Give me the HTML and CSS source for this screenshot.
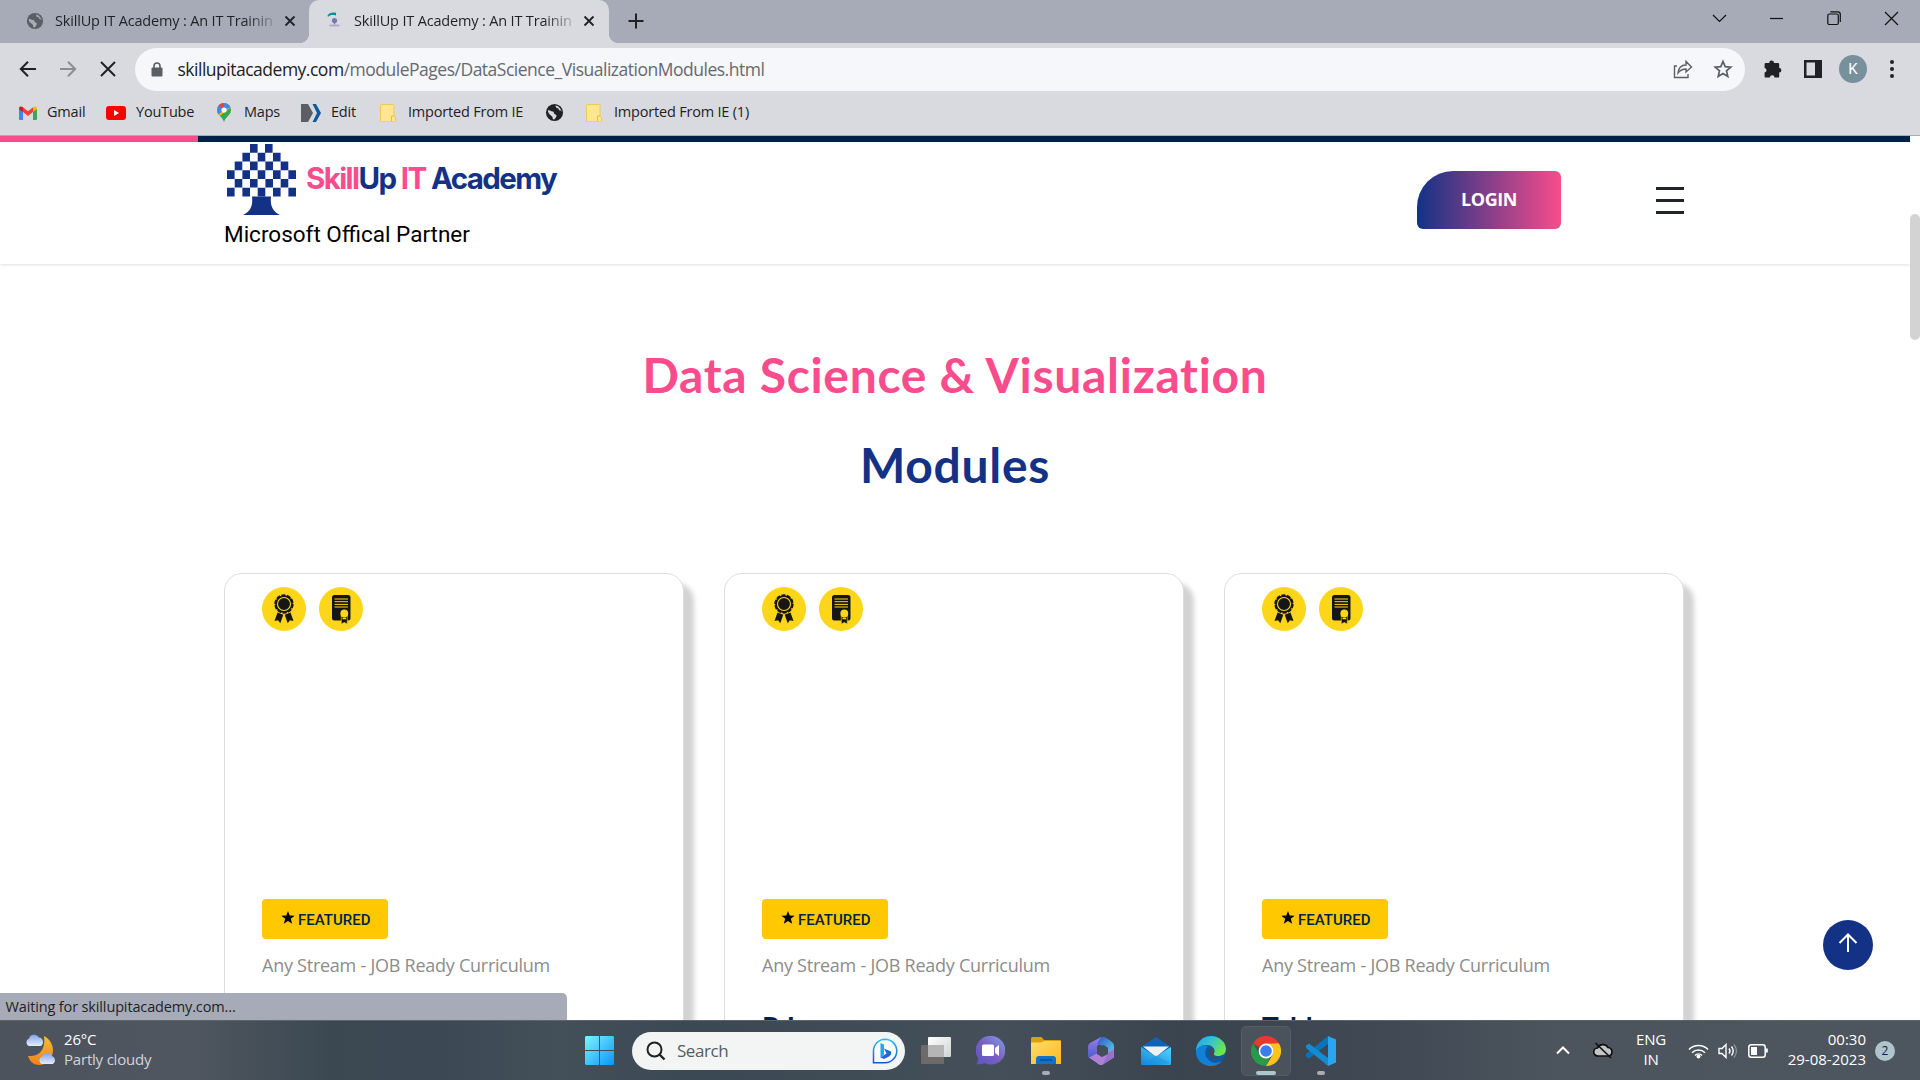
FILE: index.html
```html
<!DOCTYPE html>
<html lang="en">
<head>
<meta charset="utf-8">
<title>SkillUp IT Academy : An IT Training</title>
<link rel="stylesheet" href="styles.css">
</head>
<body>
<svg class="defs" width="0" height="0">
  <defs>
    <linearGradient id="win" x1="0" y1="0" x2="1" y2="1"><stop offset="0" stop-color="#7df4fd"/><stop offset="1" stop-color="#0a95fb"/></linearGradient>
    <linearGradient id="bing" x1="0" y1="0" x2="0" y2="1"><stop offset="0" stop-color="#22bfee"/><stop offset="1" stop-color="#1c54c4"/></linearGradient>
    <linearGradient id="chat" x1="0" y1="1" x2="1" y2="0"><stop offset="0" stop-color="#5a55c8"/><stop offset=".5" stop-color="#7b5fc0"/><stop offset="1" stop-color="#7fa0ea"/></linearGradient>
    <linearGradient id="fold" x1="0" y1="0" x2="1" y2="1"><stop offset="0" stop-color="#ffdd6a"/><stop offset="1" stop-color="#fdb81f"/></linearGradient>
    <linearGradient id="mail" x1="0" y1="1" x2="1" y2="0"><stop offset="0" stop-color="#1484dc"/><stop offset="1" stop-color="#4fd8f8"/></linearGradient>
    <linearGradient id="edge1" x1="0" y1="0" x2="1" y2=".5"><stop offset="0" stop-color="#1f9fe8"/><stop offset=".5" stop-color="#35c3cf"/><stop offset="1" stop-color="#6ce648"/></linearGradient>
    <linearGradient id="moon" x1="0" y1="0" x2="0" y2="1"><stop offset="0" stop-color="#f3be36"/><stop offset="1" stop-color="#f0801c"/></linearGradient>
    <linearGradient id="cloud" x1="0" y1="0" x2="0" y2="1"><stop offset="0" stop-color="#83a3ea"/><stop offset="1" stop-color="#e6edfb"/></linearGradient>
    <linearGradient id="m1" x1="0" y1="0" x2="0" y2="1"><stop offset="0" stop-color="#a07de8"/><stop offset="1" stop-color="#3f5ac8"/></linearGradient>
    <linearGradient id="m2" x1="0" y1="0" x2="1" y2="1"><stop offset="0" stop-color="#2a55c0"/><stop offset="1" stop-color="#5fd8fb"/></linearGradient>
    <linearGradient id="tv" x1="0" y1="0" x2="1" y2="1"><stop offset="0" stop-color="#ffffff"/><stop offset="1" stop-color="#d2d2d2"/></linearGradient>
    <symbol id="globe" viewBox="0 0 20 20"><circle cx="10" cy="10" r="9" fill="currentColor"/><path d="M3 8c2-1 3 1 5 1s1 3 3 3 1 3-1 5c-1 .8-2 0-2-1.500S6 13 5 12 3 10 3 8zM10 3c2 0 1 2.500 3 2.500S14 8 16 8s1.500-.5 1.500 1.500C17 7 15 4 12.500 3z" fill="var(--hole)"/></symbol>
    <symbol id="note" viewBox="0 0 16 18"><path d="M1 .5h12a1 1 0 0 1 1 1V12l1.500 1.500V17a.8.8 0 0 1-.8.8H1.500A1 1 0 0 1 .5 17V1.200z" fill="#ffe68f" stroke="#edca55"/><path d="M14 12h-2.500v5" fill="none" stroke="#e3bb3e"/></symbol>
    <symbol id="x" viewBox="0 0 12 12"><path d="M1.500 1.500l9 9M10.500 1.500l-9 9" stroke="currentColor" stroke-width="1.800" fill="none"/></symbol>
    <symbol id="medal" viewBox="0 0 44 44"><circle cx="22" cy="22" r="22" fill="#fdd619"/><path d="M15.500 25.500L12.500 34l3.600-.8 2.200 3 3-8.500zM28.500 25.500l3 8.500-3.600-.8-2.200 3-3-8.500z" fill="#161616"/><circle cx="22" cy="17" r="8.800" fill="#161616" stroke="#161616" stroke-width="1.800" stroke-dasharray="4.200 1.300"/><circle cx="22" cy="17" r="6.500" fill="none" stroke="#fdd619" stroke-width="1.100"/></symbol>
    <symbol id="cert" viewBox="0 0 44 44"><circle cx="22" cy="22" r="22" fill="#fdd619"/><rect x="13" y="8" width="18.500" height="25.500" rx="2.500" fill="#161616"/><path d="M15.500 12h13.500M15.500 14.700h13.500M15.500 17.400h13.500M15.500 20h13.500" stroke="#fdd619" stroke-width="1"/><path d="M22.300 28h6v9l-3-1.500-3 1.500z" fill="#161616" stroke="#fdd619" stroke-width=".6"/><circle cx="25.300" cy="26.500" r="3.900" fill="#fdd619"/><path d="M23.500 31.500h3.600" stroke="#fdd619" stroke-width="1.500"/></symbol>
    <symbol id="star" viewBox="0 0 14 13"><path d="M7 0l1.700 4.500 5 .3-3.900 3 1.400 4.900L7 10l-4.200 2.700 1.400-4.900-3.900-3 5-.3z" fill="#000"/></symbol>
  </defs>
</svg>

<div class="tabs">
  <div class="tab tab-one">
    <svg class="fav globe-grey" width="18" height="18"><use href="#globe"/></svg>
    <span class="tab-title">SkillUp IT Academy : An IT Trainin</span>
    <svg class="tab-x" width="12" height="12"><use href="#x"/></svg>
  </div>
  <div class="tab tab-two">
    <svg class="fav" width="16" height="16" viewBox="0 0 16 16"><path d="M1.500 3.500C3 1 6 0 10 .8V3.500C6 2.500 4 3 2 5z" fill="#0f8f8c"/><circle cx="8.500" cy="8.500" r="2.600" fill="#6b7cb8"/><path d="M7.800 10h1.400v2.500H7.800z" fill="#6b7cb8"/><path d="M3.500 13.500h10" stroke="#b9a3c4" stroke-width="1.800"/></svg>
    <span class="tab-title">SkillUp IT Academy : An IT Trainin</span>
    <svg class="tab-x" width="12" height="12"><use href="#x"/></svg>
  </div>
  <svg class="plus" width="16" height="16" viewBox="0 0 16 16"><path d="M8 .5v15M.5 8h15" stroke="#1f2124" stroke-width="2"/></svg>
  <div class="win-controls">
    <svg width="15" height="15" viewBox="0 0 15 15"><path d="M1 4l6.500 6.500L14 4"/></svg>
    <svg width="15" height="15" viewBox="0 0 15 15"><path d="M1 7.500h13"/></svg>
    <svg width="15" height="15" viewBox="0 0 15 15"><rect x=".8" y="3" width="10.500" height="10.500" rx="1.500"/><path d="M3.300 .8h7.500a2.500 2.500 0 0 1 2.500 2.500V11"/></svg>
    <svg width="15" height="15" viewBox="0 0 15 15"><path d="M1 1l13 13M14 1L1 14"/></svg>
  </div>
</div>

<div class="toolbar">
  <svg class="nav" width="18" height="18" viewBox="0 0 18 18"><path d="M17 9H2M9 1.800L1.800 9 9 16.200"/></svg>
  <svg class="nav nav-off" width="18" height="18" viewBox="0 0 18 18"><path d="M1 9h15M9 1.800L16.200 9 9 16.200"/></svg>
  <svg class="nav" width="18" height="18" viewBox="0 0 18 18"><path d="M2 2l14 14M16 2L2 16"/></svg>
  <div class="omnibox">
    <svg width="12" height="15" viewBox="0 0 12 15"><path d="M3 6V4a3 3 0 0 1 6 0v2" fill="none" stroke="#5b5e63" stroke-width="1.600"/><rect x=".5" y="5.500" width="11" height="9" rx="1" fill="#5b5e63"/></svg>
    <span class="url"><span class="host">skillupitacademy.com</span>/modulePages/DataScience_VisualizationModules.html</span>
    <svg class="share" width="20" height="20" viewBox="0 0 20 20"><path d="M4 7H1.500v11.500H15V15M5 14c.5-5 3-8 8-8V2.500L18.500 8 13 13V10c-4 0-6 1.500-8 4z"/></svg>
    <svg class="bookmark" width="20" height="20" viewBox="0 0 20 20"><path d="M10 2.500l2.200 5.200 5.600.5-4.300 3.700 1.300 5.500L10 14.500l-4.800 2.900 1.300-5.500L2.200 8.200l5.600-.5z"/></svg>
  </div>
  <svg class="puzzle" width="20" height="20" viewBox="0 0 20 20"><path d="M6.200 4a2.400 2.400 0 0 1 4.800 0H15a1.200 1.200 0 0 1 1.200 1.200V9a2.200 2.200 0 0 1 0 4.400v4A1.200 1.200 0 0 1 15 18.600h-3.500a2.300 2.300 0 0 0-4.600 0H2.800a1.200 1.200 0 0 1-1.200-1.200v-3.800a2.400 2.400 0 0 0 0-4.700V5.200A1.200 1.200 0 0 1 2.800 4z" fill="#1f2124"/></svg>
  <svg class="panel" width="18" height="18" viewBox="0 0 18 18"><path d="M0 0h18v18H0zM2.500 2.500v13H11v-13z" fill="#1f2124" fill-rule="evenodd"/></svg>
  <span class="avatar">K</span>
  <svg class="dots" width="4" height="18" viewBox="0 0 4 18"><circle cx="2" cy="2" r="2"/><circle cx="2" cy="9" r="2"/><circle cx="2" cy="16" r="2"/></svg>
</div>

<div class="bookmarks">
  <div class="bm bm-gmail"><svg width="18" height="14" viewBox="0 0 18 14"><path d="M0 2.500V13a1 1 0 0 0 1 1h3V5.500z" fill="#4285f4"/><path d="M18 2.500V13a1 1 0 0 1-1 1h-3V5.500z" fill="#34a853"/><path d="M14 5.500V1.500C15.500 0 18 0 18 2.500v.8z" fill="#fbbc04"/><path d="M4 6V1.300l5 3.900 5-3.900V6L9 9.900z" fill="#ea4335"/><path d="M0 3.300v-.8C0 0 2.500 0 4 1.300V6z" fill="#c5221f"/></svg><span>Gmail</span></div>
  <div class="bm bm-yt"><svg width="20" height="14" viewBox="0 0 20 14"><rect width="20" height="14" rx="3" fill="#f00"/><path d="M8 4l5 3-5 3z" fill="#fff"/></svg><span>YouTube</span></div>
  <div class="bm bm-maps"><svg width="14" height="19" viewBox="0 0 14 19"><path d="M7 0a7 7 0 0 1 7 7c0 5-5 6-7 12C5 13 0 12 0 7a7 7 0 0 1 7-7z" fill="#34a853"/><path d="M7 0a7 7 0 0 1 6.500 4.500L3 12.800C1 11 0 9.500 0 7a7 7 0 0 1 7-7z" fill="#fbbc04"/><path d="M7 0a7 7 0 0 1 6.500 4.500L7 7 1.500 11.500C.5 10 0 8.500 0 7a7 7 0 0 1 7-7z" fill="#4285f4"/><path d="M1.700 2.500A7 7 0 0 1 7 0L7 7z" fill="#ea4335"/><circle cx="7" cy="7" r="2.600" fill="#fff"/></svg><span>Maps</span></div>
  <div class="bm bm-edit"><svg width="20" height="18" viewBox="0 0 20 18"><path d="M0 0h7l5 9-5 9H0z" fill="#5b5e63"/><path d="M11.500 0H15l5 9-5 9h-3.500l4.500-9z" fill="#0f5a9c"/></svg><span>Edit</span></div>
  <div class="bm bm-ie"><svg width="16" height="18"><use href="#note"/></svg><span>Imported From IE</span></div>
  <div class="bm bm-globe"><svg class="globe-dark" width="19" height="19"><use href="#globe"/></svg></div>
  <div class="bm bm-ie1"><svg width="16" height="18"><use href="#note"/></svg><span>Imported From IE (1)</span></div>
</div>

<div class="viewport">
  <div class="page">
    <div class="progress"><div class="progress-done"></div></div>
    <header class="site-header">
      <div class="brand">
        <div class="logo">
          <svg width="69" height="71" viewBox="0 0 69 71" fill="#133286"><path d="M23 0h7.600v8.700H23zM38 0h7.600v8.700H38zM15.400 8.700H23v8.700h-7.600zM30.700 8.700h7.600v8.700h-7.600zM46 8.700h7.600v8.700H46zM7.700 17.500h7.600v8.700H7.700zM23 17.500h7.600v8.700H23zM38.400 17.500H46v8.700h-7.600zM53.700 17.500h7.600v8.700h-7.600zM0 26.200h7.600v8.700H0zM15.400 26.200H23v8.700h-7.600zM30.700 26.200h7.600v8.700h-7.600zM46 26.200h7.600v8.700H46zM61.400 26.200H69v8.700h-7.600zM7.700 35h7.600v8.600H7.700zM23 35h7.600v8.600H23zM38.400 35H46v8.600h-7.600zM53.700 35h7.600v8.600h-7.600zM0 43.700h7.600v8.700H0zM15.400 43.700H23v8.700h-7.600zM30.700 43.700h7.600v8.700h-7.600zM46 43.700h7.600v8.700H46zM61.400 43.700H69v8.700h-7.600z"/><path d="M25 52.400h19c-1 8 1 15 9 18.600H16c8-3.600 10-10 9-18.600z"/></svg>
          <span class="logo-text"><b class="pink">Skill</b>Up <b class="pink">IT</b> Academy</span>
        </div>
        <div class="partner">Microsoft Offical Partner</div>
      </div>
      <div class="login">LOGIN</div>
      <div class="menu"><i></i><i></i><i></i></div>
    </header>

    <main>
      <h1><span class="pink">Data Science &amp; Visualization</span><br>Modules</h1>
      <div class="cards">
        <article class="card">
          <div class="badges"><svg width="44" height="44"><use href="#medal"/></svg><svg width="44" height="44"><use href="#cert"/></svg></div>
          <div class="featured"><svg width="14" height="13"><use href="#star"/></svg><span>FEATURED</span></div>
          <p>Any Stream - JOB Ready Curriculum</p>
        </article>
        <article class="card">
          <div class="badges"><svg width="44" height="44"><use href="#medal"/></svg><svg width="44" height="44"><use href="#cert"/></svg></div>
          <div class="featured"><svg width="14" height="13"><use href="#star"/></svg><span>FEATURED</span></div>
          <p>Any Stream - JOB Ready Curriculum</p>
          <h2>R Language</h2>
        </article>
        <article class="card">
          <div class="badges"><svg width="44" height="44"><use href="#medal"/></svg><svg width="44" height="44"><use href="#cert"/></svg></div>
          <div class="featured"><svg width="14" height="13"><use href="#star"/></svg><span>FEATURED</span></div>
          <p>Any Stream - JOB Ready Curriculum</p>
          <h2>Tableau</h2>
        </article>
      </div>
    </main>
  </div>
  <div class="scrollbar"><div class="thumb"></div></div>
  <div class="to-top"><svg width="20" height="20" viewBox="0 0 20 20"><path d="M10 19V1.500M1.500 10L10 1.500l8.500 8.500" fill="none" stroke="#fff" stroke-width="2"/></svg></div>
  <div class="status">Waiting for skillupitacademy.com...</div>
</div>

<div class="taskbar">
  <div class="weather">
    <svg width="31" height="33" viewBox="0 0 31 33"><path d="M19 3c6 3 9 9 9 14 0 9-6 15-14 15-5 0-9-3-11-9 10 1 18-5 16-20z" fill="url(#moon)"/><path d="M4 13a4 4 0 0 1 0-7.500A5.500 5.500 0 0 1 14 4.500a4.500 4.500 0 0 1 1.500 8.500z" fill="url(#cloud)"/><path d="M17 31a4 4 0 0 1 0-7.500 5.500 5.500 0 0 1 10-.5 4.500 4.500 0 0 1 1 8z" fill="url(#cloud)"/></svg>
    <div class="weather-text"><div>26°C</div><div class="dim">Partly cloudy</div></div>
  </div>
  <svg class="start" width="29" height="29" viewBox="0 0 29 29"><path d="M1 0h13v14H0V1zM15 0h13l1 1v13H15zM0 15h14v14H1l-1-1zM15 15h14v13l-1 1H15z" fill="url(#win)"/></svg>
  <div class="search">
    <svg width="20" height="20" viewBox="0 0 20 20"><circle cx="8.500" cy="8.500" r="7" fill="none" stroke="#222" stroke-width="2"/><path d="M13.500 13.500l5 5" stroke="#222" stroke-width="2.400"/></svg>
    <span class="search-text">Search</span>
    <svg width="26" height="26" viewBox="0 0 26 26"><path d="M13 1.200a11.700 11.700 0 1 1 0 23.500H1.500V13A11.700 11.700 0 0 1 13 1.200z" fill="#f5fbff" stroke="url(#bing)" stroke-width="1.500"/><path d="M8.500 5l3.500 1.500v10l-3.500 3.500z" fill="#24a7e8"/><path d="M12 10.500l7 3c1 2-.5 4-2 5l-5 2.500-3.500-1.500 6-4z" fill="#2268d8"/></svg>
  </div>
  <div class="apps">
    <div class="app"><svg width="30" height="28" viewBox="0 0 30 28"><rect y="8" width="23" height="19" rx="1" fill="#6d6b69"/><rect x="7" width="23" height="20" rx="1" fill="url(#tv)"/><path d="M7 8h16v12H7z" fill="#b5b5b5"/></svg></div>
    <div class="app chat"><svg width="29" height="29" viewBox="0 0 29 29"><path d="M14.500 0a14.300 14.300 0 1 1-6 27c-3 1.500-6 1.500-8.300 1.200C2 26 2 24 2 22A14.300 14.300 0 0 1 14.500 0z" fill="url(#chat)"/><rect x="6" y="8.500" width="12" height="11.500" rx="1.500" fill="#fff"/><path d="M19 12l4-3v11l-4-3z" fill="#fff"/></svg></div>
    <div class="app run"><svg width="30" height="27" viewBox="0 0 30 27"><path d="M0 1.500A1.500 1.500 0 0 1 1.500 0h9L13 3H29a1 1 0 0 1 1 1v6H0z" fill="#dd9e0c"/><path d="M0 5.500h10L13 4h16a1 1 0 0 1 1 1v22H0z" fill="url(#fold)"/><path d="M5 27v-5a3 3 0 0 1 3-3h14a3 3 0 0 1 3 3v5z" fill="#1173c8"/><path d="M9 23h12" stroke="#0a4f94" stroke-width="1.500"/></svg></div>
    <div class="app"><svg width="26" height="28" viewBox="0 0 26 28"><path d="M13 0L3 5.500Q0 7 0 10v10l5 3 4-4V9l8-7z" fill="url(#m1)"/><path d="M13 0q3-.5 6 1.500l5 3.500q2 1.500 2 4v11l-6-3v-6L9 7z" fill="url(#m2)"/><path d="M1 20.500l8-4 5 3 12-8v9l-11 7q-2 1-4 0z" fill="#b07fd6"/><path d="M20 16l5.500-3v7.500L15 27z" fill="#7d62c9" opacity=".5"/><path d="M9 9.500l7-1.500 4 3v6l-6 3-5-3z" fill="#434e58"/></svg></div>
    <div class="app"><svg width="30" height="28" viewBox="0 0 30 28"><path d="M0 10L15 0l15 10v7H0z" fill="#1063b4"/><path d="M2 9.500h26L15 20z" fill="#f1f1f1"/><path d="M0 10l15 9.500L30 10v17a1 1 0 0 1-1 1H1a1 1 0 0 1-1-1z" fill="url(#mail)"/><path d="M15 18.500L0 28h15l15-2z" fill="#1a8fe0" opacity=".45"/></svg></div>
    <div class="app"><svg width="30" height="30" viewBox="0 0 30 30"><circle cx="15" cy="15" r="15" fill="#0c59a4"/><path d="M0 16C0 10 7 8 12 10c-3 3-4 8-1 12 3 5 9 6 15 3-4 5-10 5.500-14 4.700C5 28.500 0 23 0 16z" fill="#1380d8"/><path d="M0 15C0 6 7 0 15 0s15 6 15 13c0 5-4 7-8 7-3 0-5-1-4-3 2-3-1-8-7-8-5 0-9 1-11 6z" fill="url(#edge1)"/><path d="M16 12.500c-3 0-4 3-3 6 1 4 6 5 12 4l3-1.500c-2 1-5 1-7.500.5-3-.7-3.500-2-2.500-4 .7-1.500 0-4-2-5z" fill="#3f4a55"/></svg></div>
    <div class="app run active"><svg width="30" height="30" viewBox="0 0 30 30"><path d="M15 15L2 7.500A15 15 0 0 1 28 7.500H15z" fill="#e33b2e"/><path d="M15 15h6.500L15 30A15 15 0 0 1 2 7.500l6.500 11z" fill="#2a9a48"/><path d="M28 7.500A15 15 0 0 1 15 30l6.500-11.200L21 8z" fill="#fcc31e"/><path d="M28 7.500H15v3h6z" fill="#fcc31e"/><circle cx="15" cy="15" r="7.400" fill="#fff"/><circle cx="15" cy="15" r="5.800" fill="#3a7df0"/></svg></div>
    <div class="app run"><svg width="30" height="30" viewBox="0 0 30 30"><path d="M22 0v8L3 22.500 0 20.500v-2.500z" fill="#0a74ba"/><path d="M3 7.500L22 22v8L0 12V9.500z" fill="#168bd2"/><path d="M22 0l8 3.500v23L22 30z" fill="#2aa5f2"/></svg></div>
  </div>
  <div class="tray">
    <svg class="chev" width="14" height="9" viewBox="0 0 14 9"><path d="M1 7.500l6-6 6 6" fill="none" stroke="#fff" stroke-width="2"/></svg>
    <svg class="onedrive" width="20" height="17" viewBox="0 0 20 17"><path d="M5 14a4 4 0 0 1-.5-8A6 6 0 0 1 15 5.500 4.300 4.300 0 0 1 15.500 14z" fill="#c4c5c6" stroke="#111" stroke-width="1.700"/><path d="M2.500 1l15.500 15" stroke="#111" stroke-width="1.700"/></svg>
    <div class="lang"><div>ENG</div><div>IN</div></div>
    <svg class="wifi" width="21" height="16" viewBox="0 0 21 16"><path d="M1 6.500a13.500 13.500 0 0 1 19 0M4 9.700a9.200 9.200 0 0 1 13 0M7 12.500a5 5 0 0 1 7 0" fill="none" stroke="#fff" stroke-width="1.500"/><circle cx="10.500" cy="13.500" r="2" fill="#fff"/></svg>
    <svg class="vol" width="20" height="16" viewBox="0 0 20 16"><path d="M1 5.500h3L8 1.500v13l-4-4H1z" fill="none" stroke="#fff" stroke-width="1.400"/><path d="M11 5.500q2 2.500 0 5M13.500 3.500q3.500 4.500 0 9" fill="none" stroke="#fff" stroke-width="1.400"/><path d="M16 1.500q5 6.500 0 13" fill="none" stroke="#8b929a" stroke-width="1.300"/></svg>
    <svg class="bat" width="20" height="14" viewBox="0 0 20 14"><rect x=".8" y=".8" width="16.400" height="12.400" rx="2.500" fill="none" stroke="#fff" stroke-width="1.500"/><rect x="3" y="3" width="6" height="8" fill="#fff"/><path d="M18 4.500h1.800v4H18z" fill="#fff"/></svg>
    <div class="clock"><div>00:30</div><div>29-08-2023</div></div>
    <span class="count">2</span>
  </div>
</div>
</body>
</html>
```
FILE: styles.css
```css
* { box-sizing: border-box; }
body { margin: 0; width: 1920px; height: 1080px; overflow: hidden; font-family: "Open Sans", "Noto Sans", sans-serif; font-size: 15px; color: #1f2124; background: #fff; position: relative; }
svg { flex: none; display: block; }
.defs { position: absolute; }
.pink { color: #f84c8c; font-weight: inherit; }

.tabs { display: flex; height: 43px; background: #a7abb8; }
.tab { display: flex; align-items: center; height: 43px; padding-bottom: 1px; }
.tab-one { width: 309px; padding-left: 26px; }
.tab-two { width: 300px; padding-left: 17px; background: #d9dadf; border-radius: 10px 10px 0 0; position: relative; }
.tab-two::before, .tab-two::after { content: ""; position: absolute; bottom: 0; width: 10px; height: 10px; }
.tab-two::before { left: -10px; background: radial-gradient(circle at 0 0, transparent 10px, #d9dadf 10.5px); }
.tab-two::after { right: -10px; background: radial-gradient(circle at 100% 0, transparent 10px, #d9dadf 10.5px); }
.tab-two .fav { margin-top: -3px; }
.globe-grey { color: #5b5e63; --hole: #a7abb8; }
.globe-dark { color: #1f2124; --hole: #d9dadf; }
.tab-title { width: 219px; margin: -2px 0 0 11px; overflow: hidden; white-space: nowrap; font-size: 14.5px; letter-spacing: -.17px; -webkit-mask-image: linear-gradient(90deg, #000 190px, rgba(0,0,0,.25) 217px); mask-image: linear-gradient(90deg, #000 190px, rgba(0,0,0,.25) 217px); }
.tab-two .tab-title { margin-left: 12px; }
.tab-x { margin-left: 10px; }
.plus { margin: 13px 0 0 19px; }
.win-controls { display: flex; gap: 42.300px; margin: 11px 21px 0 auto; }
.win-controls path, .win-controls rect { fill: none; stroke: #111; stroke-width: 1.200; }

.toolbar { display: flex; align-items: center; height: 52px; padding: 0 0 0 18.500px; background: #d9dadf; }
.nav { margin-right: 22px; }
.nav path { fill: none; stroke: #1f2124; stroke-width: 2; }
.nav-off path { stroke: #8b8d92; }
.omnibox { display: flex; align-items: center; width: 1610px; height: 43px; margin-left: -3.500px; padding: 0 12px 0 16px; border-radius: 22px; background: #f5f7fa; }
.url { margin-left: 14.500px; margin-right: auto; font-size: 17.500px; letter-spacing: -.49px; white-space: nowrap; color: #66696e; }
.host { color: #1f2124; }
.share path { fill: none; stroke: #5b5e63; stroke-width: 1.400; }
.bookmark { margin-left: 20px; }
.bookmark path { fill: none; stroke: #5b5e63; stroke-width: 1.700; }
.puzzle { margin-left: 18px; }
.panel { margin-left: 21px; }
.avatar { display: flex; align-items: center; justify-content: center; width: 28px; height: 28px; margin-left: 17px; border-radius: 50%; background: #78909c; color: #fff; font: 15px Roboto, sans-serif; }
.dots { margin-left: 23px; fill: #1f2124; }

.bookmarks { display: flex; height: 41px; padding: 0 0 5px 19px; background: #d9dadf; border-bottom: 1px solid #a9acb0; font-size: 14.500px; letter-spacing: -.2px; }
.bm { display: flex; align-items: center; white-space: nowrap; }
.bm span { margin-top: -2px; }
.bm-gmail { width: 87px; gap: 10px; }
.bm-yt { width: 111px; gap: 10px; }
.bm-maps { width: 84px; gap: 13px; }
.bm-edit { width: 79px; gap: 10px; }
.bm-ie { width: 165px; gap: 12px; }
.bm-globe { width: 41px; }
.bm-ie1 { gap: 12px; }

.viewport { display: flex; position: relative; height: 884px; overflow: hidden; }
.page { width: 1910px; overflow: hidden; }
.progress { height: 6px; background: #002248; }
.progress-done { width: 198px; height: 6px; background: #f84c8c; }
.site-header { display: flex; height: 122px; padding-left: 224px; box-shadow: 0 1px 3px rgba(0,0,0,.13); }
.brand { width: 1193px; padding-top: 2px; }
.logo { display: flex; align-items: center; padding-left: 3px; }
.logo-text { margin: -4px 0 0 10px; font: 700 29.500px Inter, sans-serif; letter-spacing: -1.600px; white-space: nowrap; color: #133286; }
.partner { margin-top: 5px; font: 22.500px/28px Roboto, sans-serif; color: #000; }
.login { display: flex; align-items: center; justify-content: center; width: 144px; height: 58px; margin-top: 29px; padding-bottom: 2px; border-radius: 36px 6px 6px 6px; background: linear-gradient(90deg, #133286, #f84c8c); color: #fff; font-weight: 700; font-size: 18px; letter-spacing: -.4px; }
.menu { display: flex; flex-direction: column; gap: 9px; width: 28px; margin: 45px 0 0 95px; }
.menu i { height: 3px; background: #212529; }

main { padding: 66px 0 0 224px; }
h1 { width: 1462px; margin: 0; font: 700 48px/90px Lato, sans-serif; letter-spacing: .7px; color: #133286; text-align: center; }
.cards { display: flex; gap: 40px; margin-top: 63px; }
.card { width: 460px; height: 600px; padding: 13px 37px; border: 1px solid #ddd; border-radius: 18px; background: #fff; box-shadow: 10px 10px 5px lightgray; }
.badges { display: flex; gap: 13px; }
.featured { display: flex; align-items: center; gap: 3px; width: 126px; height: 40px; margin-top: 268px; padding-left: 19px; border-radius: 4px; background: #ffc800; color: #002248; font: 500 15px Roboto, sans-serif; }
.featured svg { margin-top: -3px; }
.featured span { margin-top: 1px; }
.card p { margin: 14px 0 0; font-size: 18px; line-height: 25px; letter-spacing: -.25px; color: #8c8c8c; white-space: nowrap; }
.card h2 { margin: 32px 0 0; font: 700 28px/34px Lato, sans-serif; color: #002248; }
.scrollbar { width: 10px; padding-top: 78px; }
.thumb { height: 126px; border-radius: 5px; background: #d3d3d3; }
.to-top { position: absolute; left: 1823px; top: 784px; display: flex; align-items: center; justify-content: center; width: 50px; height: 50px; padding-bottom: 4px; border-radius: 50%; background: #133286; }
.status { position: absolute; left: 0; bottom: 0; width: 567px; height: 27px; padding-left: 5.500px; border-top-right-radius: 5px; background: #a7abb8; font-size: 14.500px; letter-spacing: -.14px; line-height: 27px; }

.taskbar { display: flex; align-items: center; height: 60px; border-top: 1px solid #5c636b; background: linear-gradient(90deg, #4d535d 0, #4f565f 190px, #3b4852 330px, #3c4954 440px, #434f59 560px, #3b4954 690px, #3f4b55 850px, #444f59 1000px, #3a444e 1180px, #414a54 1400px, #4c545e 1560px, #4d555f 100%); color: #fff; }
.weather { display: flex; gap: 8px; width: 585px; padding-left: 25px; }
.weather svg { margin-top: 1px; }
.weather-text, .lang, .clock { line-height: 20px; margin-top: -3px; letter-spacing: -.2px; }
.dim { color: #d2d5d8; }
.search { display: flex; align-items: center; width: 273px; height: 38px; margin-left: 18px; padding: 0 7px 0 14px; border-radius: 19px; background: #f3f5f5; }
.search-text { margin: 0 auto 0 11px; font-size: 17px; letter-spacing: -.45px; color: #575b5e; }
.apps { display: flex; gap: 5px; margin-left: 6px; }
.app { display: flex; align-items: center; justify-content: center; width: 50px; height: 50px; border-radius: 5px; position: relative; }
.chat { padding-right: 2px; }
.run::after { content: ""; position: absolute; bottom: 1px; width: 8px; height: 4px; border-radius: 2px; background: #a9adb1; }
.active { background: #4a525c; border: 1px solid #555d66; }
.active::after { width: 20px; bottom: 0; background: #aec7ce; }
.tray { display: flex; align-items: center; margin-left: 210px; }
.onedrive { margin-left: 23px; }
.lang { width: 48px; margin-left: 14px; text-align: center; }
.wifi { margin-left: 13px; }
.vol { margin-left: 9px; }
.bat { margin-left: 10px; }
.clock { width: 98px; text-align: right; letter-spacing: 0; }
.count { display: flex; align-items: center; justify-content: center; width: 20px; height: 20px; margin-left: 9px; border-radius: 50%; background: #adc5cb; color: #1f2124; font-size: 12px; }
```
